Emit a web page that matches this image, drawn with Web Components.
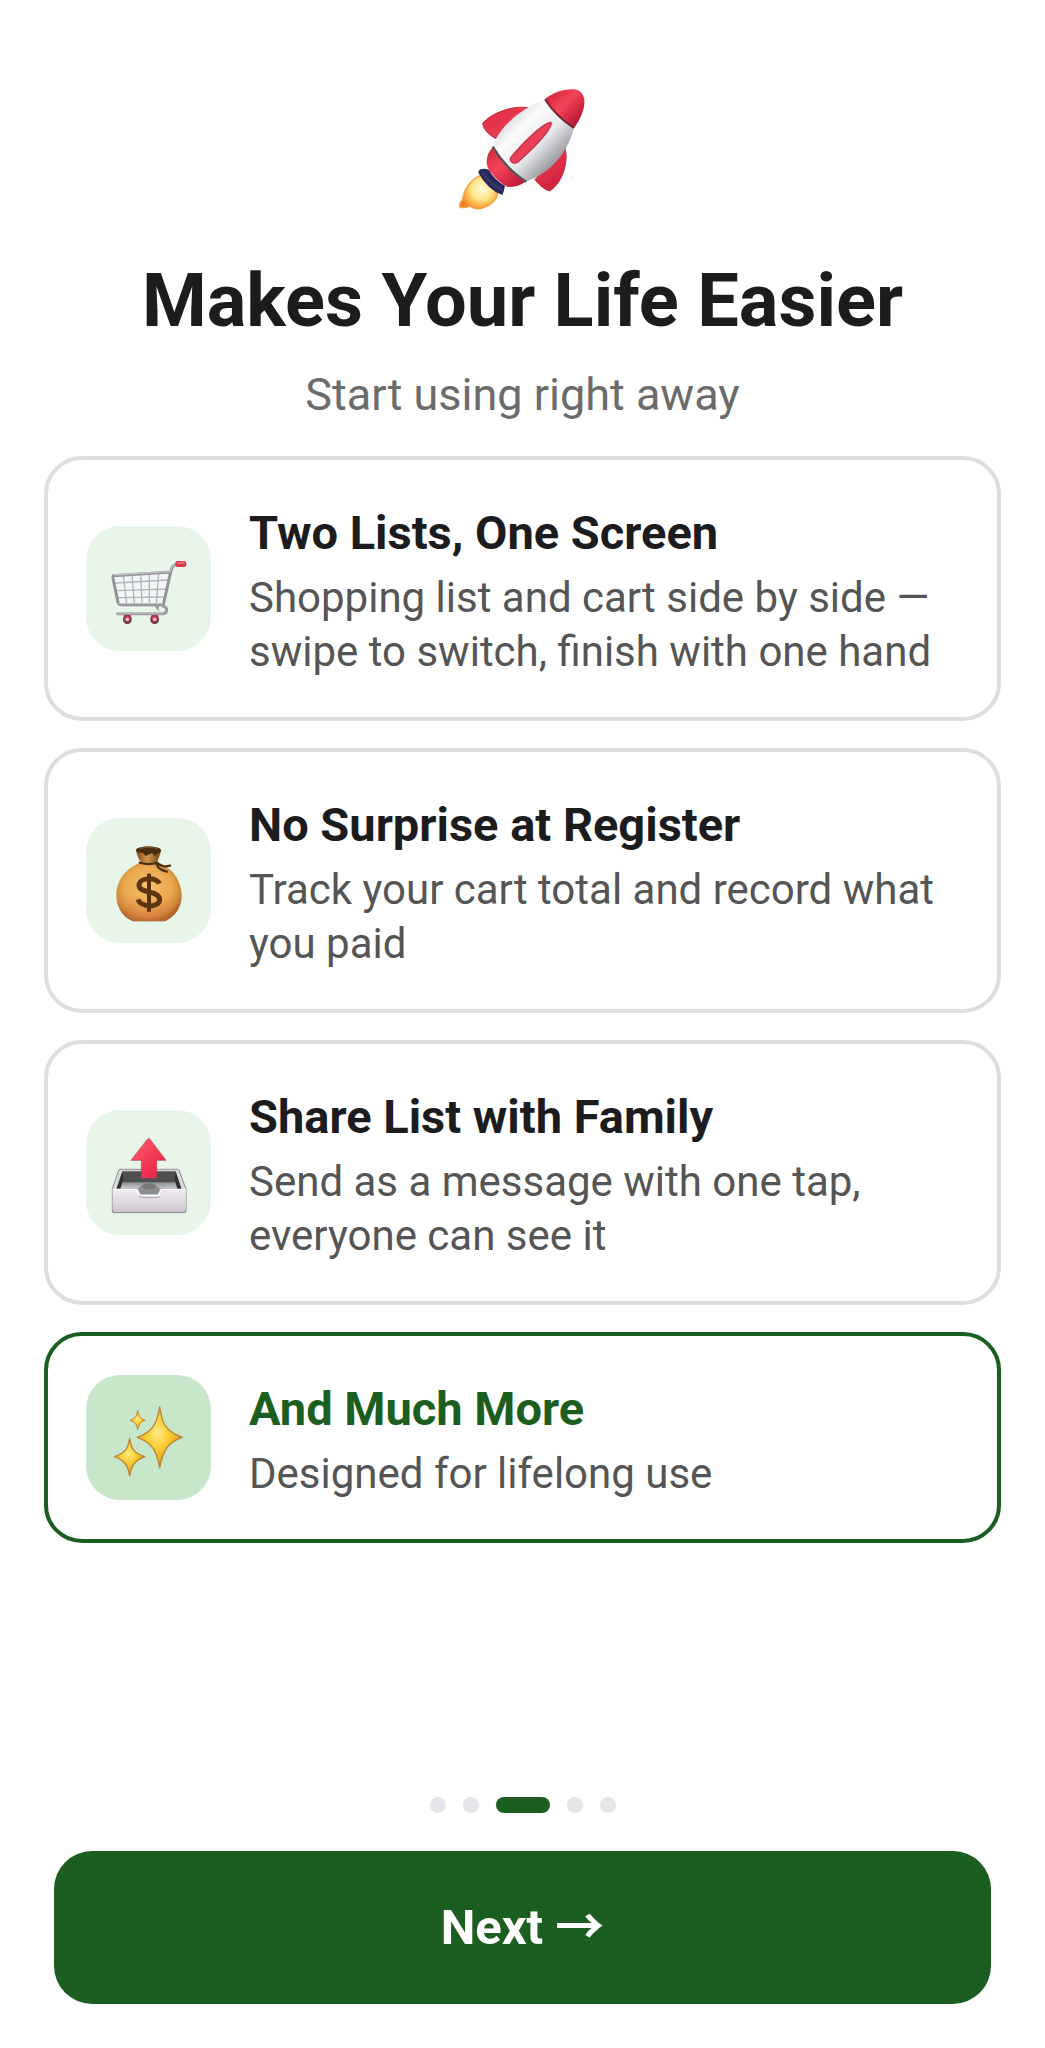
<!DOCTYPE html>
<html lang="en">
<head>
<meta charset="utf-8">
<meta name="viewport" content="width=device-width, initial-scale=1">
<title>Makes Your Life Easier</title>
<style>
  body {
    margin: 0;
    background: #ffffff;
    font-family: Roboto, "Noto Sans CJK JP", "Liberation Sans", sans-serif;
  }
</style>
</head>
<body>
<onboarding-screen>
  <hero-rocket slot="hero"></hero-rocket>
  <span slot="title">Makes Your Life Easier</span>
  <span slot="subtitle">Start using right away</span>

  <feature-card icon="cart">
    <span slot="title">Two Lists, One Screen</span>
    Shopping list and cart side by side — swipe to switch, finish with one hand
  </feature-card>
  <feature-card icon="money">
    <span slot="title">No Surprise at Register</span>
    Track your cart total and record what you paid
  </feature-card>
  <feature-card icon="outbox">
    <span slot="title">Share List with Family</span>
    Send as a message with one tap, everyone can see it
  </feature-card>
  <feature-card icon="sparkles" highlight>
    <span slot="title">And Much More</span>
    Designed for lifelong use
  </feature-card>

  <page-dots slot="footer" count="5" current="3"></page-dots>
  <primary-button slot="footer">Next →</primary-button>
</onboarding-screen>

<script>
// Icons
const ICONS = {
  cart: `
    <svg viewBox="18 17 375 375" aria-hidden="true">
      <path d="M102 168 L270 155 L248 250 L118 250 Z" fill="#f3f6f6"/>
      <g fill="none" stroke="#b4b6ba" stroke-width="4">
        <path d="M106 188 L266 179 M110 211 L260 206 M114 232 L254 230"/>
        <path d="M130 166 L140 250 M156 164 L163 250 M182 162 L186 250 M208 160 L208 250 M236 158 L229 250"/>
      </g>
      <path d="M290 131 C278 134 274 142 272 155 L101 166 Q98 167 99 174 L114 246 Q116 253 123 253 L250 253 L272 155" fill="none" stroke="#929499" stroke-width="9" stroke-linejoin="round"/>
      <path d="M290 130 C278 133 274 141 271 153 L103 164 M116 250 L248 250" fill="none" stroke="#bfc1c5" stroke-width="4"/>
      <path d="M228 256 L239 270 M246 256 Q260 258 260 270 Q260 280 248 280 L109 280" fill="none" stroke="#9b9da2" stroke-width="9" stroke-linejoin="round"/>
      <path d="M110 278 L250 278" stroke="#c8c9cc" stroke-width="3"/>
      <circle cx="242" cy="265" r="6" fill="#eef1f3"/>
      <rect x="286" y="122" width="33" height="18" rx="6" fill="#d93a48"/>
      <rect x="290" y="125" width="25" height="6" rx="3" fill="#f0707a"/>
      <path d="M132 284 H152 L155 297 H129 Z M214 284 H234 L237 297 H211 Z" fill="#dc3a58"/>
      <circle cx="142" cy="298" r="13" fill="#5b3b47"/>
      <circle cx="224" cy="298" r="13" fill="#5b3b47"/>
      <circle cx="142" cy="296" r="9" fill="#d63a5a"/>
      <circle cx="224" cy="296" r="9" fill="#d63a5a"/>
      <circle cx="142" cy="297" r="5" fill="#f2cdd3"/>
      <circle cx="224" cy="297" r="5" fill="#f2cdd3"/>
    </svg>`,
  money: `
    <svg viewBox="18 17 375 375" aria-hidden="true">
      <defs>
        <radialGradient id="bag" cx=".48" cy=".42" r=".6">
          <stop offset="0" stop-color="#fac06a"/>
          <stop offset=".6" stop-color="#eaa84e"/>
          <stop offset=".84" stop-color="#d08a36"/>
          <stop offset="1" stop-color="#8c5313"/>
        </radialGradient>
        <linearGradient id="base" x1="0" y1="0" x2="0" y2="1">
          <stop offset=".55" stop-color="#e08050" stop-opacity="0"/>
          <stop offset="1" stop-color="#d97545" stop-opacity=".6"/>
        </linearGradient>
        <linearGradient id="neck" x1="0" y1="0" x2="1" y2="0">
          <stop offset="0" stop-color="#7a4715"/>
          <stop offset=".45" stop-color="#d8964a"/>
          <stop offset="1" stop-color="#69400f"/>
        </linearGradient>
      </defs>
      <path d="M181 152 C143 163 109 202 109 248 C109 289 134 317 156 325 Q160 327 166 327 H247 Q253 327 258 325 C282 315 305 288 305 249 C305 202 272 163 237 152 Z" fill="url(#bag)"/>
      <path d="M181 152 C143 163 109 202 109 248 C109 289 134 317 156 325 Q160 327 166 327 H247 Q253 327 258 325 C282 315 305 288 305 249 C305 202 272 163 237 152 Z" fill="url(#base)"/>
      <path d="M168 113 Q173 139 184 151 H230 Q237 139 243 114 Z" fill="url(#neck)"/>
      <path d="M168 114 C168 99 243 99 243 114 Q243 122 232 122 L225 132 L216 122 L197 131 L188 121 Q168 122 168 114 Z" fill="#4b2c0d"/>
      <path d="M178 108 Q205 101 234 109" fill="none" stroke="#76502a" stroke-width="4"/>
      <path d="M179 151 Q206 159 232 151 Q236 158 253 163 L270 160 M230 154 Q232 172 261 178" fill="none" stroke="#4d3212" stroke-width="7" stroke-linecap="round" stroke-linejoin="round"/>
      <path d="M207 184 V298" fill="none" stroke="#56310b" stroke-width="12"/>
      <path d="M238 214 C231 195 178 193 177 219 C177 246 239 232 239 262 C238 288 183 286 174 261" fill="none" stroke="#5e360c" stroke-width="15"/>
    </svg>`,
  outbox: `
    <svg viewBox="18 15 375 375" aria-hidden="true">
      <defs>
        <linearGradient id="front" x1="0" y1="0" x2="0" y2="1">
          <stop offset="0" stop-color="#f2eef4"/>
          <stop offset="1" stop-color="#cfc5d0"/>
        </linearGradient>
        <linearGradient id="arrow" x1="0" y1="0" x2="1" y2="1">
          <stop offset="0" stop-color="#ff6673"/>
          <stop offset=".5" stop-color="#f33b55"/>
          <stop offset="1" stop-color="#e01d4c"/>
        </linearGradient>
        <linearGradient id="floor" x1="0" y1="0" x2="0" y2="1">
          <stop offset="0" stop-color="#8b8e90"/>
          <stop offset="1" stop-color="#c6c9cd"/>
        </linearGradient>
      </defs>
      <path d="M120 193 H292 Q296 193 298 198 L318 252 V318 Q318 323 313 323 H102 Q97 323 97 318 V252 L115 198 Q116 193 120 193 Z" fill="#d9d8db" stroke="#8f8d91" stroke-width="3"/>
      <path d="M127 199 H287 L304 251 H109 Z" fill="#4e4f4e"/>
      <path d="M126 232 H287 L293 251 H120 Z" fill="url(#floor)"/>
      <path d="M127 201 L111 251 H121 L130 222 Z M287 201 L304 251 H292 L284 222 Z" fill="#30302f"/>
      <path d="M174 251 Q190 233 207 233 Q224 233 240 251 L234 268 H181 Z" fill="#8b8d8f"/>
      <ellipse cx="207" cy="244" rx="20" ry="9" fill="#77797a"/>
      <path d="M98 252 H165 Q170 252 172 257 L176 266 Q178 271 184 271 H231 Q236 271 238 266 L242 257 Q244 252 249 252 H317 V317 Q317 322 312 322 H103 Q98 322 98 317 Z" fill="url(#front)"/>
      <path d="M98 253 H165 Q170 253 172 258 L176 267 Q178 272 184 272 H231 Q236 272 238 267 L242 258 Q244 253 249 253 H317" fill="none" stroke="#ffffff" stroke-width="4"/>
      <path d="M176 273 Q179 277 185 277 H231 Q237 277 240 273" fill="none" stroke="#aaa3ad" stroke-width="3"/>
      <path d="M98 315 Q98 322 104 322 H312 Q317 322 317 315" fill="none" stroke="#978f99" stroke-width="3"/>
      <path d="M206 101 Q209 101 211 104 L258 166 H230 V217 Q230 219 228 219 H186 Q184 219 184 217 V166 H153 L201 104 Q203 101 206 101 Z" fill="url(#arrow)" stroke="#c04052" stroke-width="2"/>
    </svg>`,
  sparkles: `
    <svg viewBox="18 20 375 375" aria-hidden="true">
      <defs>
        <radialGradient id="gold" cx=".45" cy=".42" r=".55">
          <stop offset="0" stop-color="#ffe985"/>
          <stop offset=".45" stop-color="#fbcf34"/>
          <stop offset=".8" stop-color="#e9a92a"/>
          <stop offset="1" stop-color="#a8792f"/>
        </radialGradient>
      </defs>
      <g fill="url(#gold)" stroke="#bb8631" stroke-width="4" stroke-linejoin="round">
        <path d="M239 116 C246 165 257 190 307 207 C260 223 248 250 239 299 C230 250 219 224 172 207 C219 190 231 166 239 116 Z"/>
        <path d="M149 210 C154 242 160 254 195 265 C161 277 155 293 149 322 C143 293 136 276 103 265 C137 254 144 240 149 210 Z"/>
        <path stroke-width="3" d="M173 126 C176 144 179 150 196 156 C179 162 176 169 173 185 C170 169 167 162 150 156 C167 150 170 144 173 126 Z"/>
      </g>
    </svg>`,
};

// Templates
const createTemplate = (html) => {
  const template = document.createElement("template");
  template.innerHTML = html;
  return template;
};

const screenTemplate = createTemplate(`
<style>
  :host {
    display: flex;
    flex-direction: column;
    box-sizing: border-box;
    min-height: 100vh;
    padding: 70px 44px 44px;
  }
  header {
    display: flex;
    flex-direction: column;
    align-items: center;
    text-align: center;
  }
  h1 {
    margin: 37px 0 0;
    font-size: 74px;
    line-height: 88px;
    font-weight: 700;
    color: #1c1c1e;
  }
  p {
    margin: 22px 0 0;
    font-size: 45px;
    line-height: 56px;
    color: #6b6b6b;
  }
  main {
    display: flex;
    flex-direction: column;
    gap: 27px;
    margin-top: 33px;
  }
  footer {
    display: flex;
    flex-direction: column;
    gap: 38px;
    margin-top: auto;
    padding: 38px 10px 0;
  }
</style>
<header>
  <slot name="hero"></slot>
  <h1><slot name="title"></slot></h1>
  <p><slot name="subtitle"></slot></p>
</header>
<main><slot></slot></main>
<footer><slot name="footer"></slot></footer>
`);

const rocketTemplate = createTemplate(`
<style>
  :host {
    display: block;
  }
  svg {
    display: block;
    width: 165px;
    height: 150px;
  }
</style>
<svg viewBox="0 0 495 450" role="img" aria-label="Rocket">
  <defs>
    <linearGradient id="body" gradientUnits="userSpaceOnUse" x1="205" y1="130" x2="345" y2="270">
      <stop offset="0" stop-color="#d5d6d8"/>
      <stop offset=".3" stop-color="#fdfdfd"/>
      <stop offset=".65" stop-color="#e9eaec"/>
      <stop offset="1" stop-color="#9fa1a6"/>
    </linearGradient>
    <linearGradient id="nose" gradientUnits="userSpaceOnUse" x1="340" y1="70" x2="425" y2="150">
      <stop offset="0" stop-color="#d92c40"/>
      <stop offset=".4" stop-color="#f5445a"/>
      <stop offset="1" stop-color="#b3152f"/>
    </linearGradient>
    <linearGradient id="tail" gradientUnits="userSpaceOnUse" x1="145" y1="250" x2="230" y2="350">
      <stop offset="0" stop-color="#d92c40"/>
      <stop offset=".4" stop-color="#f5445a"/>
      <stop offset="1" stop-color="#c01a36"/>
    </linearGradient>
    <linearGradient id="fin" gradientUnits="userSpaceOnUse" x1="150" y1="110" x2="360" y2="350">
      <stop offset="0" stop-color="#df2c42"/>
      <stop offset=".5" stop-color="#f4495e"/>
      <stop offset="1" stop-color="#cf1f3c"/>
    </linearGradient>
    <radialGradient id="flame" gradientUnits="userSpaceOnUse" cx="125" cy="358" r="68">
      <stop offset="0" stop-color="#fffbd8"/>
      <stop offset=".45" stop-color="#ffe68c"/>
      <stop offset=".75" stop-color="#fbaf3f"/>
      <stop offset="1" stop-color="#ee7d2c"/>
    </radialGradient>
  </defs>
  <path d="M122 315 C92 328 70 360 68 390 Q56 400 60 411 Q75 415 91 408 Q101 418 120 416 C145 412 170 392 173 372 Z" fill="url(#flame)" stroke="#f5a13c" stroke-width="4" stroke-linejoin="round"/>
  <path d="M265 113 C220 105 155 128 128 160 Q130 185 169 207 Z" fill="url(#fin)" stroke="#c2283c" stroke-width="3" stroke-linejoin="round"/>
  <path d="M372 228 C390 265 368 340 329 363 Q307 357 285 329 Z" fill="url(#fin)" stroke="#c2283c" stroke-width="3" stroke-linejoin="round"/>
  <path d="M158 232 C137 253 134 286 151 305 Q175 337 202 350 C222 353 245 346 256 334 Z" fill="url(#tail)"/>
  <path d="M314 88 C255 110 184 161 158 228 C183 270 220 310 260 334 C330 308 380 255 402 174 Q350 138 314 88 Z" fill="url(#body)"/>
  <path d="M158 230 C181 270 220 312 259 335" fill="none" stroke="#555258" stroke-width="7"/>
  <path d="M315 87 C340 66 375 55 405 58 Q427 62 433 87 C436 115 421 149 402 174 Q348 140 315 87 Z" fill="url(#nose)"/>
  <path d="M315 88 Q348 140 402 174" fill="none" stroke="#6b2733" stroke-width="6"/>
  <path d="M121 298 Q135 294 147 300 Q164 331 195 347 Q193 362 187 375 Q142 358 115 308 Q116 301 121 298 Z" fill="#2b285b"/>
  <path d="M126 306 Q150 343 188 360" fill="none" stroke="#3a3a70" stroke-width="6"/>
  <path d="M333 157 C340 169 300 218 234 276 Q224 283 215 276 Q207 269 215 259 C260 206 316 155 333 157 Z" fill="#e94058" stroke="#c23045" stroke-width="4"/>
</svg>
`);

const cardTemplate = createTemplate(`
<style>
  :host {
    display: flex;
    align-items: center;
    gap: 38px;
    padding: 38px;
    border: 4px solid #dedede;
    border-radius: 38px;
  }
  :host([highlight]) {
    border-color: #1b5e20;
  }
  .icon {
    flex: none;
    width: 125px;
    height: 125px;
    border-radius: 34px;
    background: #e8f5e9;
  }
  :host([highlight]) .icon {
    background: #c8e6c9;
  }
  svg {
    display: block;
    width: 100%;
    height: 100%;
  }
  .text {
    flex: 1;
    min-width: 0;
  }
  h2 {
    margin: 0 0 3px;
    font-size: 47px;
    line-height: 70px;
    font-weight: 700;
    color: #1c1c1e;
  }
  :host([highlight]) h2 {
    color: #1b5e20;
  }
  p {
    margin: 0;
    font-size: 42px;
    line-height: 54px;
    color: #555555;
  }
</style>
<div class="icon"></div>
<div class="text">
  <h2><slot name="title"></slot></h2>
  <p><slot></slot></p>
</div>
`);

const dotsTemplate = createTemplate(`
<style>
  :host {
    display: flex;
    justify-content: center;
    gap: 17px;
  }
  span {
    width: 16px;
    height: 16px;
    border-radius: 8px;
    background: #e5e5ea;
  }
  .current {
    width: 54px;
    background: #1b5e20;
  }
</style>
`);

const buttonTemplate = createTemplate(`
<style>
  :host {
    display: block;
  }
  button {
    display: block;
    width: 100%;
    padding: 48px;
    border: 0;
    border-radius: 38px;
    background: #1b5e20;
    color: #ffffff;
    font: inherit;
    font-size: 49px;
    line-height: 57px;
    font-weight: 700;
    cursor: pointer;
  }
</style>
<button type="button"><slot></slot></button>
`);

// Elements
class BaseElement extends HTMLElement {
  constructor(template) {
    super();
    this._shadow = this.attachShadow({ mode: "open" });
    this._shadow.appendChild(template.content.cloneNode(true));
  }
}

class OnboardingScreen extends BaseElement {
  constructor() {
    super(screenTemplate);
  }
}

class HeroRocket extends BaseElement {
  constructor() {
    super(rocketTemplate);
  }
}

class FeatureCard extends BaseElement {
  constructor() {
    super(cardTemplate);
  }
  connectedCallback() {
    const icon = this._shadow.querySelector(".icon");
    icon.innerHTML = ICONS[this.getAttribute("icon")] || "";
  }
}

class PageDots extends BaseElement {
  constructor() {
    super(dotsTemplate);
  }
  connectedCallback() {
    const count = Number(this.getAttribute("count"));
    const current = Number(this.getAttribute("current"));
    this.setAttribute("role", "img");
    this.setAttribute("aria-label", `Page ${current} of ${count}`);
    for (let i = 1; i <= count; i++) {
      const dot = document.createElement("span");
      if (i === current) dot.className = "current";
      this._shadow.appendChild(dot);
    }
  }
}

class PrimaryButton extends BaseElement {
  constructor() {
    super(buttonTemplate);
  }
}

customElements.define("onboarding-screen", OnboardingScreen);
customElements.define("hero-rocket", HeroRocket);
customElements.define("feature-card", FeatureCard);
customElements.define("page-dots", PageDots);
customElements.define("primary-button", PrimaryButton);
</script>
</body>
</html>
